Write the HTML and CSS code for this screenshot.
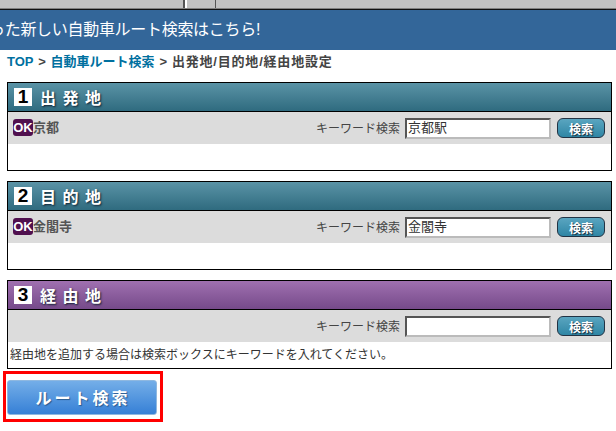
FILE: index.html
```html
<!DOCTYPE html>
<html lang="ja">
<head>
  <meta charset="UTF-8" />
  <title>ルート検索</title>
  <link rel="stylesheet" href="styles.css">
</head>
<body>
  <div class="tabs">
    <div class="tab tab-wide"></div>
    <div class="tab tab-small"></div>
    <div class="tab tab-rest"></div>
  </div>
  <div class="banner"><p>った新しい自動車ルート検索はこちら!</p></div>
  <div class="crumbs">
    <a href="#">TOP</a> &gt; <a href="#">自動車ルート検索</a> &gt; <span class="here">出発地/目的地/経由地設定</span>
  </div>

  <div class="panel">
    <h3 class="panel-head"><span class="num">1</span>出 発 地</h3>
    <div class="row">
      <div class="place"><span class="ok">OK</span><span class="name">京都</span></div>
      <label class="kw">キーワード検索</label>
      <input class="kw-input" type="text" value="京都駅" />
      <button class="kw-btn">検索</button>
    </div>
    <div class="note"></div>
  </div>

  <div class="panel">
    <h3 class="panel-head"><span class="num">2</span>目 的 地</h3>
    <div class="row">
      <div class="place"><span class="ok">OK</span><span class="name">金閣寺</span></div>
      <label class="kw">キーワード検索</label>
      <input class="kw-input" type="text" value="金閣寺" />
      <button class="kw-btn">検索</button>
    </div>
    <div class="note"></div>
  </div>

  <div class="panel">
    <h3 class="panel-head purple"><span class="num">3</span>経 由 地</h3>
    <div class="row">
      <div class="place"></div>
      <label class="kw">キーワード検索</label>
      <input class="kw-input" type="text" value="" />
      <button class="kw-btn">検索</button>
    </div>
    <div class="note">経由地を追加する場合は検索ボックスにキーワードを入れてください。</div>
  </div>

  <div class="submit-box"><button class="submit">ルート検索</button></div>
</body>
</html>
```

FILE: styles.css
```css
body {
  font-family: "Liberation Sans", "Noto Sans CJK JP", sans-serif;
  background: #fff;
  margin: 0;
  padding: 0;
  overflow: hidden;
}
.tabs {
  display: flex;
  height: 8px;
  background: #c2c2c2;
  border-bottom: 1px solid #808080;
}
.tab {
  height: 8px;
}
.tab-wide {
  width: 183px;
}
.tab-small {
  width: 30px;
  border-left: 2px solid #555;
  border-right: 1px solid #555;
  background: linear-gradient(to right, #fff 2px, transparent 2px);
}
.banner {
  background: #336699;
  border-top: 1px solid #111;
  height: 40px;
  overflow: hidden;
}
.banner p {
  margin: 0 0 0 -11px;
  padding-top: 8px;
  color: #fff;
  font-size: 16px;
  letter-spacing: -0.3px;
  line-height: 24px;
  white-space: nowrap;
}
.crumbs {
  height: 32px;
  padding: 4px 0 0 7px;
  box-sizing: border-box;
  font-size: 13px;
  line-height: 16px;
  font-weight: bold;
  word-spacing: 1.25px;
  color: #444;
}
.crumbs a {
  color: #00709f;
  text-decoration: none;
}
.here {
  letter-spacing: 0.8px;
}
.panel {
  margin: 0 4px 10px 7px;
  border: 1px solid #000;
  height: 87px;
}
.panel-head {
  margin: 0;
  height: 28px;
  border-bottom: 1px solid #000;
  display: flex;
  align-items: center;
  padding-left: 6px;
  font-size: 16px;
  font-weight: bold;
  letter-spacing: 1px;
  color: #fff;
  text-shadow: 1px 1px 2px #123;
  background: linear-gradient(#5a93a6, #2f6b7f);
}
.panel-head.purple {
  background: linear-gradient(#a070b0, #764a8a);
}
.num {
  width: 18px;
  height: 18px;
  background: #fff;
  color: #000;
  font-size: 19px;
  letter-spacing: 0;
  text-shadow: none;
  text-align: center;
  line-height: 18px;
  margin-right: 8px;
}
.row {
  display: flex;
  align-items: center;
  height: 32px;
  background: #dcdcdc;
  padding: 0 6px 0 5px;
  font-size: 12px;
  color: #444;
}
.place {
  flex: 1;
  display: flex;
  align-items: center;
  font-size: 13px;
  font-weight: bold;
  color: #555;
}
.name {
  margin-bottom: 3px;
}
.ok {
  width: 20px;
  height: 17px;
  margin-bottom: 1px;
  background: #50104f;
  color: #fff;
  border-radius: 3px;
  text-align: center;
  line-height: 17px;
  font-size: 13px;
}
.kw {
  margin: 0 5px 2px 0;
}
.kw-input {
  width: 146px;
  height: 21px;
  box-sizing: border-box;
  padding: 0 1px 3px;
  margin: 0 6px 0 0;
  font-family: inherit;
  font-size: 13px;
  border: 2px solid;
  border-color: #555 #bbb #bbb #555;
  background: #fff;
  color: #333;
}
.kw-btn {
  width: 48px;
  height: 20px;
  padding: 0;
  border: 1px solid #234;
  border-radius: 6px;
  background: linear-gradient(#5aa5c0, #2f86a5);
  color: #fff;
  font-family: inherit;
  font-size: 12px;
  font-weight: bold;
  text-shadow: 1px 1px 1px #123;
}
.note {
  font-size: 12px;
  line-height: 26px;
  color: #333;
  padding-left: 2px;
}
.submit-box {
  margin: -8px 0 0 3px;
  width: 160px;
  height: 51px;
  box-sizing: border-box;
  border: 3px solid #f00;
  padding: 6px 0 0 1px;
}
.submit {
  display: block;
  width: 150px;
  height: 35px;
  padding: 0 0 2px 2px;
  border: 1px solid #8fb8e0;
  border-radius: 3px;
  background: linear-gradient(#74aee8, #3680d6);
  color: #fff;
  font-family: inherit;
  font-size: 16px;
  font-weight: bold;
  letter-spacing: 3px;
  text-shadow: 1px 1px 1px #2a5a90;
}
```
